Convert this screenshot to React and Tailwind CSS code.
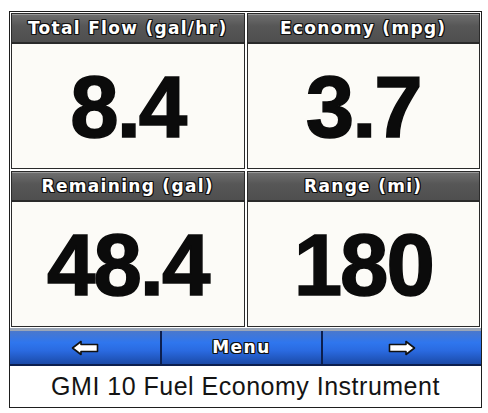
import React from "react";

const outline =
  "[text-shadow:-1px_0_#111,1px_0_#111,0_-1px_#111,0_1px_#111,-1px_-1px_#111,1px_1px_#111,-1px_1px_#111,1px_-1px_#111]";

function Cell({ label, value }) {
  return (
    <div className="flex flex-col border border-[#2a2a2a] bg-[#fcfbf7]">
      <div className="flex h-[30px] items-center justify-center border-b-2 border-[#2a2a2a] border-t border-t-[#9a9a9a] bg-[linear-gradient(#6e6e6e,#575757_40%,#4f4f4f)]">
        <span
          className={`font-['DejaVu_Sans',sans-serif] text-[17px] font-bold leading-none tracking-[1.3px] text-white ${outline}`}
        >
          {label}
        </span>
      </div>
      <div className="flex flex-1 items-center justify-center">
        <span className="font-['Liberation_Sans',Arial,sans-serif] text-[87px] font-bold leading-none tracking-[-2px] text-[#0b0b0b] [-webkit-text-stroke:1.5px_#0b0b0b]">
          {value}
        </span>
      </div>
    </div>
  );
}

function Arrow({ flip }) {
  return (
    <svg
      width="28"
      height="16"
      viewBox="0 0 28 16"
      className={flip ? "-scale-x-100" : ""}
    >
      <polygon
        points="1.5,8 10,1.5 10,4.5 26.5,4.5 26.5,11.5 10,11.5 10,14.5"
        fill="#ffffff"
        stroke="#111111"
        strokeWidth="1.6"
        strokeLinejoin="round"
      />
    </svg>
  );
}

export default function App() {
  return (
    <div className="h-[413px] w-[488px] bg-white pl-[9px] pt-[11px]">
      <div className="flex h-[397px] w-[473px] flex-col border border-[#1e1e1e] bg-white">
        <div className="grid flex-1 grid-cols-2 grid-rows-2 gap-[2px] p-[1px]">
          <Cell label="Total Flow (gal/hr)" value="8.4" />
          <Cell label="Economy (mpg)" value="3.7" />
          <Cell label="Remaining (gal)" value="48.4" />
          <Cell label="Range (mi)" value="180" />
        </div>
        <div className="flex h-[38px] flex-col">
          <div className="h-[3px] bg-[#9aa6b8]" />
          <div className="grid flex-1 grid-cols-[152px_161px_1fr] border-b-2 border-[#0c1f4f] bg-[linear-gradient(#4a78cc,#2f76ee_35%,#2a6ae0_60%,#1b4aa8)]">
            <div className="flex items-center justify-center border-r-2 border-[#0c1f4f]">
              <Arrow />
            </div>
            <div className="flex items-center justify-center border-r-2 border-[#0c1f4f]">
              <span
                className={`font-['DejaVu_Sans',sans-serif] text-[17px] font-bold leading-none tracking-[1.5px] text-white ${outline}`}
              >
                Menu
              </span>
            </div>
            <div className="flex items-center justify-center">
              <Arrow flip />
            </div>
          </div>
        </div>
        <div className="flex h-[41px] items-center justify-center bg-white">
          <span className="font-['Liberation_Sans',Arial,sans-serif] text-[25px] leading-none tracking-[0.5px] text-[#141414]">
            GMI 10 Fuel Economy Instrument
          </span>
        </div>
      </div>
    </div>
  );
}
